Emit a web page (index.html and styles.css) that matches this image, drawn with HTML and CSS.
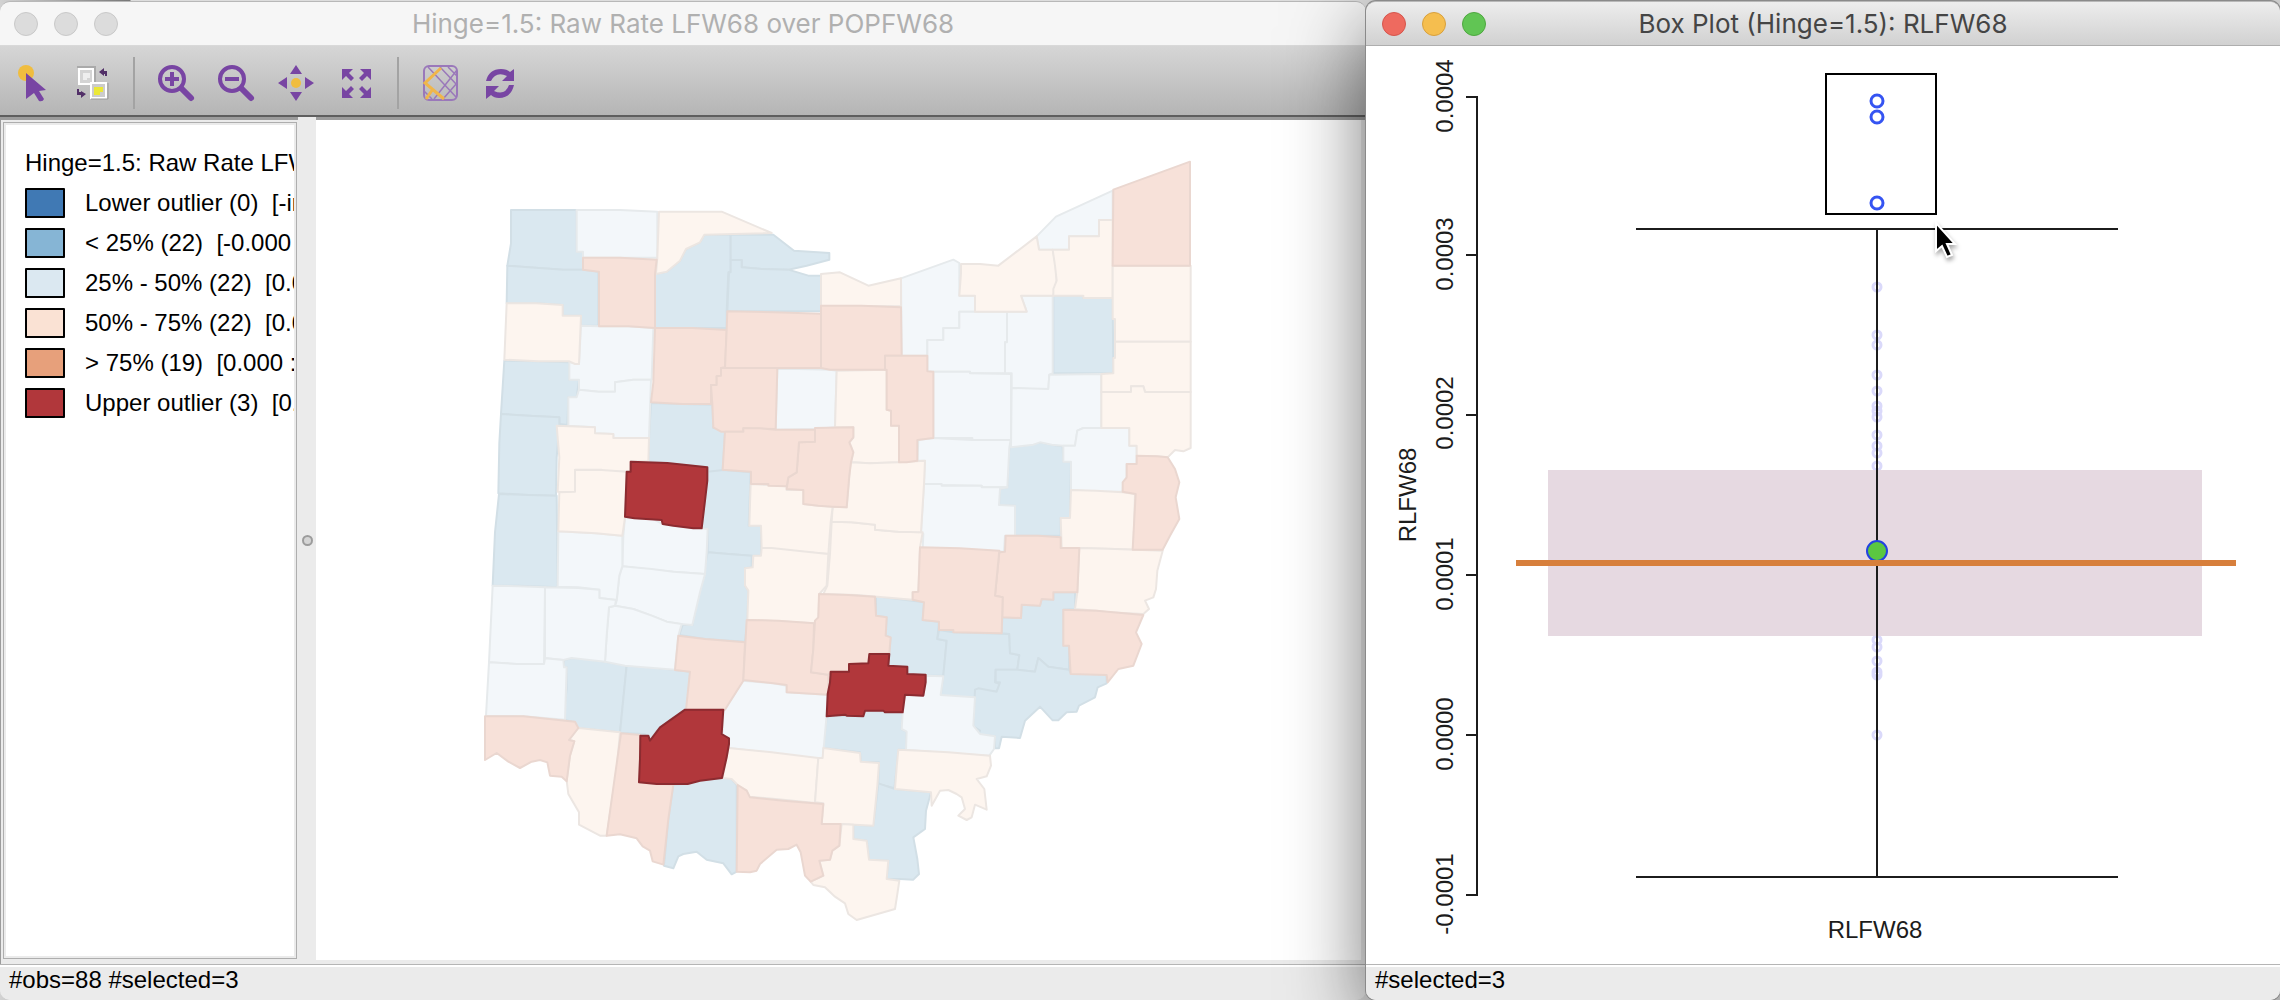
FILE: index.html
```html
<!DOCTYPE html>
<html lang="en">
<head>
<meta charset="utf-8">
<title>Hinge=1.5: Raw Rate LFW68 over POPFW68</title>
<link rel="stylesheet" href="styles.css">
</head>
<body>
<main class="desktop">
<section class="window window-map">
  <header class="titlebar titlebar-inactive">
    <div class="lights"><button class="light" aria-label="Close"></button><button class="light" aria-label="Minimize"></button><button class="light" aria-label="Zoom"></button></div>
    <h1 class="title">Hinge=1.5: Raw Rate LFW68 over POPFW68</h1>
  </header>
  <nav class="toolbar" aria-label="Map tools">
    <button class="tool" aria-label="Select"><svg viewBox="0 0 40 40"><circle cx="14" cy="10" r="8" fill="#f0bd3f"/><path d="M14 10L34 27L27 28L32 36Q31 39 27 38L22 30L14 36Z" fill="#7845a3"/></svg></button>
    <button class="tool" aria-label="Invert selection"><svg viewBox="0 0 40 40"><path d="M5 4H23V22" fill="none" stroke="#aaa" stroke-width="2"/><rect x="7" y="6" width="14" height="15" fill="#d4d4d4" stroke="#fff" stroke-width="2"/><path d="M11 10H18V15H15V17H11Z" fill="#eee"/><rect x="19" y="20" width="15" height="15" fill="#ccc" stroke="#fff" stroke-width="2"/><path d="M19 36H36V20" fill="none" stroke="#999"/><path d="M22 24H31V29H28V32H22Z" fill="#ebe837"/><path d="M27 9L32 5V8H35V13H33V11H32V13ZM5 26V32H9V35L14 31L9 28V29H7V26Z" fill="#523068"/></svg></button>
    <span class="divider"></span>
    <button class="tool" aria-label="Zoom in"><svg viewBox="0 0 40 40" fill="none" stroke="#7845a3"><circle cx="16" cy="16" r="12" stroke-width="4"/><path d="M26 26L35 35" stroke-width="6" stroke-linecap="round"/><path d="M9 16H23M16 9V23" stroke-width="4"/></svg></button>
    <button class="tool" aria-label="Zoom out"><svg viewBox="0 0 40 40" fill="none" stroke="#7845a3"><circle cx="16" cy="16" r="12" stroke-width="4"/><path d="M26 26L35 35" stroke-width="6" stroke-linecap="round"/><path d="M9 16H23" stroke-width="4"/></svg></button>
    <button class="tool" aria-label="Pan"><svg viewBox="0 0 40 40"><path d="M20 2L26 11H14ZM20 38L14 29H26ZM2 20L11 14V26ZM38 20L29 14V26Z" fill="#7845a3"/><circle cx="20" cy="20" r="5" fill="#f0bd3f"/></svg></button>
    <button class="tool" aria-label="Full extent"><svg viewBox="0 0 40 40"><path id="corner" d="M6 6H17L13 10L18 15L15 18L10 13L6 17Z" fill="#7845a3"/><use href="#corner" transform="matrix(-1 0 0 1 41 0)"/><use href="#corner" transform="matrix(1 0 0 -1 0 41)"/><use href="#corner" transform="matrix(-1 0 0 -1 41 41)"/></svg></button>
    <span class="divider"></span>
    <button class="tool" aria-label="Base map"><svg viewBox="0 0 40 40" fill="none"><rect x="4" y="3" width="33" height="34" rx="5" stroke="#9a78ba" stroke-width="2"/><path d="M8 4L36 34M20 4L37 22M37 7L14 36M37 20L23 36M28 4L37 13M4 28L12 36" stroke="#9a78ba" stroke-width="1.500"/><path d="M21 5L5 20L24 36M13 26L6 36" stroke="#f0b64a" stroke-width="3"/></svg></button>
    <button class="tool" aria-label="Refresh"><svg viewBox="0 0 40 40"><path d="M6 18Q9 6 21 6Q27 6 30 9L34 6V18H22L27 13Q16 8 11 18ZM34 22Q31 35 19 35Q14 35 11 32L6 36V23H19L14 28Q25 33 29 22Z" fill="#7845a3"/></svg></button>
  </nav>
  <div class="workspace">
    <aside class="legend-frame">
      <div class="legend">
        <h2 class="legend-title">Hinge=1.5: Raw Rate LFW68 over POPFW68</h2>
        <ul class="legend-list">
          <li><i class="swatch sw-lower"></i>Lower outlier (0)&nbsp; [-inf : -0.000]</li>
          <li><i class="swatch sw-q1"></i>&lt; 25% (22)&nbsp; [-0.000 : 0.000]</li>
          <li><i class="swatch sw-q2"></i>25% - 50% (22)&nbsp; [0.000 : 0.000]</li>
          <li><i class="swatch sw-q3"></i>50% - 75% (22)&nbsp; [0.000 : 0.000]</li>
          <li><i class="swatch sw-q4"></i>&gt; 75% (19)&nbsp; [0.000 : 0.000]</li>
          <li><i class="swatch sw-upper"></i>Upper outlier (3)&nbsp; [0.000 : inf]</li>
        </ul>
      </div>
    </aside>
    <div class="splitter"><span class="grip"></span></div>
    <div class="map-pane">
      <svg class="map" viewBox="-432 -87 3135 2517" preserveAspectRatio="xMinYMin meet" role="img" aria-label="Ohio counties">
        <g class="q1">
          <path d="M153 183L350 183L350 308L369 308L369 362L310 362L205 355L142 350L153 283Z"/>
          <path d="M142 350L205 355L310 362L370 362L415 368L415 530L363 530L363 500L308 500L308 468L228 463L140 463Z"/>
          <path d="M733 257L812 257L812 370L805 370L800 487L800 537L585 537L585 375L620 368L660 335L678 300L720 280Z"/>
          <path d="M812 257L940 257L1002 305L1108 312L1108 332L1040 350L985 362L905 360L845 355L845 333L812 333Z"/>
          <path d="M812 333L845 333L845 355L905 360L985 362L1045 380L1083 380L1083 487L802 487L807 370L812 370Z"/>
          <path d="M1780 440L1870 440L1870 447L1958 447L1960 673L1780 673Z"/>
          <path d="M133 635L235 637L328 640L328 692L357 692L350 745L325 745L322 828L298 825L298 805L205 800L123 795Z"/>
          <path d="M1648 895L1690 890L1740 880L1780 888L1808 892L1810 938L1833 938L1830 1107L1802 1107L1802 1160L1665 1160L1665 1070L1617 1068L1620 1020L1642 1015Z"/>
          <path d="M573 762L667 765L757 767L760 837L785 840L795 850L788 965L745 970L743 955L565 937L567 867Z"/>
          <path d="M123 795L205 800L298 805L298 828L290 925L288 1040L205 1038L115 1033L118 882Z"/>
          <path d="M117 1035L205 1038L290 1040L293 1315L255 1313L175 1310L98 1310L105 1150Z"/>
          <path d="M743 968L790 963L872 970L866 1130L903 1130L903 1220L875 1220L805 1215L743 1210L743 1140L725 1138L735 1055Z"/>
          <path d="M743 1210L805 1215L875 1220L875 1255L855 1258L855 1310L865 1325L862 1413L855 1478L735 1470L658 1458L668 1427L697 1428L718 1320L735 1250Z"/>
          <path d="M312 1533L335 1527L365 1528L435 1538L500 1550L490 1650L480 1750L352 1737L345 1720L310 1712L320 1620L320 1555L312 1555Z"/>
          <path d="M500 1550L570 1555L645 1563L690 1568L685 1680L640 1705L590 1745L570 1775L555 1755L480 1752L490 1650Z"/>
          <path d="M1248 1342L1315 1350L1392 1360L1388 1413L1437 1418L1432 1470L1460 1475L1450 1580L1398 1580L1342 1575L1342 1553L1285 1550L1288 1513L1292 1465L1277 1460L1280 1405L1248 1400Z"/>
          <path d="M1437 1443L1480 1450L1648 1455L1650 1513L1678 1518L1672 1562L1607 1562L1605 1600L1620 1605L1610 1628L1555 1622L1545 1647L1442 1640L1450 1580L1460 1475L1432 1470Z"/>
          <path d="M1627 1405L1683 1407L1685 1367L1740 1370L1745 1350L1780 1352L1780 1330L1845 1330L1845 1380L1810 1382L1810 1490L1827 1490L1827 1562L1765 1553L1735 1527L1725 1568L1672 1562L1678 1518L1650 1513L1648 1455L1625 1453Z"/>
          <path d="M1607 1562L1672 1562L1725 1568L1735 1527L1765 1553L1827 1562L1832 1572L1940 1577L1940 1603L1913 1615L1905 1645L1857 1670L1850 1688L1820 1690L1795 1714L1778 1714L1740 1673L1695 1715L1680 1767L1625 1763L1617 1798L1605 1798L1605 1762L1555 1757L1560 1745L1540 1732L1545 1622L1555 1618L1610 1628L1620 1600L1607 1600Z"/>
          <path d="M1100 1702L1160 1700L1210 1702L1215 1685L1328 1690L1325 1740L1340 1748L1338 1802L1315 1802L1310 1855L1303 1918L1255 1905L1257 1840L1203 1838L1200 1810L1090 1797Z"/>
          <path d="M640 1907L683 1905L720 1895L786 1887L815 1890L830 1908L830 2168L815 2176L790 2143L740 2132L710 2108L670 2115L655 2122L640 2158L612 2150L625 2010Z"/>
          <path d="M1255 1903L1305 1920L1413 1930L1398 1985L1395 2040L1360 2065L1372 2130L1377 2175L1360 2192L1320 2190L1280 2190L1285 2135L1227 2132L1220 2075L1180 2070L1180 2027L1240 2030Z"/>
        </g>
        <g class="q2">
          <path d="M350 183L480 183L592 188L592 326L369 326L369 308L350 308Z"/>
          <path d="M1323 388L1480 332L1498 342L1498 440L1545 440L1545 488L1498 488L1498 537L1450 537L1450 573L1402 573L1402 620L1325 620Z"/>
          <path d="M1730 262L1788 203L1958 125L1958 213L1917 213L1917 262L1827 262L1827 302L1737 302Z"/>
          <path d="M363 530L417 532L505 532L580 537L575 692L520 692L465 700L465 728L415 728L357 722L357 692L328 692L328 640L357 645Z"/>
          <path d="M357 722L415 728L465 728L465 700L520 692L573 692L567 867L460 867L460 855L405 853L405 835L325 830L325 745L350 745Z"/>
          <path d="M952 660L1015 660L1110 662L1130 665L1125 835L1065 840L947 842Z"/>
          <path d="M1402 573L1450 573L1450 537L1498 537L1498 488L1641 488L1641 580L1635 580L1635 673L1530 673L1530 668L1402 668Z"/>
          <path d="M1641 488L1700 488L1683 440L1778 440L1778 673L1768 677L1765 720L1710 720L1655 717L1655 673L1635 673L1635 580L1641 580Z"/>
          <path d="M1655 717L1765 720L1768 677L1924 675L1924 837L1870 837L1852 845L1845 890L1810 890L1775 887L1740 880L1720 887L1680 892L1653 895Z"/>
          <path d="M1420 668L1530 668L1530 673L1653 675L1653 873L1537 873L1537 867L1420 867Z"/>
          <path d="M1852 845L1870 837L2008 837L2008 890L2030 890L2030 945L2000 945L2000 990L1990 1000L1988 1028L1910 1028L1833 1023L1833 938L1810 938L1810 890L1845 890Z"/>
          <path d="M1372 935L1375 873L1420 867L1535 873L1652 873L1648 895L1642 1015L1565 1015L1565 1010L1445 1008L1392 1005L1395 935Z"/>
          <path d="M1392 1005L1445 1005L1445 1010L1565 1010L1565 1015L1642 1015L1620 1020L1617 1068L1665 1070L1665 1160L1635 1160L1632 1208L1500 1200L1388 1197L1390 1155L1383 1150L1388 1070Z"/>
          <path d="M495 1105L580 1110L608 1125L640 1130L725 1138L743 1140L740 1210L735 1275L640 1268L575 1262L487 1252L490 1160Z"/>
          <path d="M487 1252L575 1260L640 1268L735 1275L720 1330L697 1428L660 1425L620 1418L575 1400L520 1380L465 1370L470 1355L478 1280Z"/>
          <path d="M295 1147L408 1153L487 1160L487 1252L478 1280L470 1353L418 1347L418 1322L355 1315L293 1313Z"/>
          <path d="M465 1370L447 1375L440 1460L435 1538L495 1550L645 1562L655 1460L665 1425L620 1418L575 1400L520 1380Z"/>
          <path d="M255 1315L355 1317L418 1322L418 1347L468 1353L465 1370L447 1375L440 1460L435 1538L335 1527L310 1533L255 1527Z"/>
          <path d="M98 1310L175 1312L255 1315L252 1545L170 1545L87 1540Z"/>
          <path d="M87 1540L170 1545L252 1545L255 1528L310 1533L312 1555L320 1555L315 1712L190 1702L78 1700Z"/>
          <path d="M1398 1580L1450 1582L1442 1638L1545 1645L1540 1730L1560 1755L1605 1762L1602 1800L1588 1820L1465 1813L1338 1802L1340 1748L1325 1740L1328 1690L1335 1638L1390 1640Z"/>
          <path d="M848 1595L940 1603L980 1610L980 1630L1103 1637L1098 1720L1088 1830L1030 1825L935 1812L805 1797L808 1770L787 1765L790 1682L815 1650Z"/>
        </g>
        <g class="q3">
          <path d="M597 188L785 188L935 252L733 257L720 280L678 300L660 335L620 368L588 375L592 326Z"/>
          <path d="M1083 375L1140 370L1225 410L1323 388L1323 472L1083 470Z"/>
          <path d="M1503 345L1560 345L1615 350L1730 262L1737 302L1778 302L1787 350L1790 395L1780 440L1683 440L1700 488L1545 488L1545 440L1498 440L1503 373Z"/>
          <path d="M1778 302L1827 302L1827 262L1917 262L1917 213L1958 213L1958 447L1870 447L1870 440L1780 440L1780 420L1790 395L1785 350Z"/>
          <path d="M140 463L228 463L308 468L308 500L363 500L357 645L345 645L328 637L235 637L133 632Z"/>
          <path d="M1130 665L1280 662L1280 782L1293 785L1293 830L1317 830L1317 940L1230 943L1173 940L1180 910L1168 880L1180 865L1180 835L1125 835Z"/>
          <path d="M1958 350L2192 350L2192 578L1965 578L1965 510L1958 510Z"/>
          <path d="M1965 578L2192 578L2192 729L2055 729L2050 712L2013 712L2013 729L1924 729L1924 675L1960 673L1960 627L1965 627Z"/>
          <path d="M1924 729L2013 729L2013 712L2050 712L2055 729L2192 729L2192 897L2170 907L2145 903L2123 925L2090 922L2030 920L2030 890L2008 890L2008 837L1924 837Z"/>
          <path d="M1833 1023L1908 1025L1988 1030L2025 1035L2020 1202L1965 1200L1858 1197L1805 1197L1802 1107L1830 1107Z"/>
          <path d="M1858 1197L1965 1200L2108 1205L2092 1265L2088 1320L2080 1345L2055 1355L2067 1380L2050 1395L1945 1390L1910 1385L1845 1380L1852 1330Z"/>
          <path d="M1115 1118L1175 1120L1245 1127L1245 1142L1315 1148L1388 1150L1380 1195L1375 1328L1358 1330L1358 1352L1270 1345L1190 1338L1090 1335L1102 1310L1110 1215Z"/>
          <path d="M1172 940L1230 943L1315 940L1395 935L1392 1005L1383 1150L1315 1148L1245 1142L1245 1127L1175 1120L1115 1118L1118 1073L1160 1075L1168 980Z"/>
          <path d="M290 830L405 835L405 853L460 855L460 867L567 867L565 937L512 937L510 968L430 968L425 962L345 962L345 1030L293 1028L298 925Z"/>
          <path d="M345 963L425 963L500 968L495 1105L487 1160L408 1153L295 1147L298 1030L345 1028Z"/>
          <path d="M872 1005L925 1008L980 1012L980 1023L1030 1023L1030 1065L1075 1070L1118 1073L1112 1120L1105 1215L1040 1210L905 1197L903 1130L868 1130Z"/>
          <path d="M905 1197L935 1197L1040 1208L1105 1215L1100 1310L1078 1335L1075 1405L1062 1423L960 1417L862 1413L865 1325L855 1310L855 1258L878 1255L880 1220L903 1220Z"/>
          <path d="M1315 1802L1380 1805L1465 1810L1590 1820L1593 1850L1580 1882L1550 1890L1573 1920L1580 1982L1545 1967L1535 2005L1520 2013L1495 2000L1515 1980L1505 1945L1490 1935L1465 1923L1440 1925L1415 1970L1413 1930L1305 1920L1310 1855Z"/>
          <path d="M355 1737L480 1750L470 1860L440 2060L420 2060L357 2027L357 1990L325 1935L320 1895L330 1820L343 1777L327 1773Z"/>
          <path d="M805 1797L935 1810L1075 1827L1065 1962L970 1952L868 1943L860 1925L833 1908L815 1890L788 1887Z"/>
          <path d="M1090 1797L1200 1812L1202 1838L1257 1842L1252 1910L1240 2030L1145 2025L1085 2025L1090 1963L1065 1960L1075 1827L1088 1827Z"/>
          <path d="M1145 2025L1180 2027L1180 2070L1220 2075L1227 2132L1285 2135L1280 2190L1318 2195L1312 2235L1305 2280L1190 2313L1165 2295L1155 2263L1125 2243L1095 2215L1060 2208L1052 2198L1090 2180L1078 2135L1110 2132L1117 2105L1138 2090Z"/>
        </g>
        <g class="q4">
          <path d="M369 326L480 326L590 332L585 375L585 537L505 532L417 532L417 368L369 362Z"/>
          <path d="M1960 122L2190 38L2190 350L1958 350Z"/>
          <path d="M585 537L697 537L800 543L795 655L783 657L783 680L770 682L770 708L753 708L753 765L667 765L573 760L580 700Z"/>
          <path d="M802 487L942 490L1083 494L1083 657L795 657L800 543Z"/>
          <path d="M1083 470L1205 470L1323 475L1325 620L1275 620L1275 662L1110 662L1083 657Z"/>
          <path d="M783 657L952 657L947 840L850 838L850 848L783 848L760 835L757 765L753 708L770 708L770 682L783 680Z"/>
          <path d="M1275 620L1402 620L1402 667L1420 668L1420 867L1372 873L1372 935L1340 940L1317 940L1317 830L1293 830L1293 785L1280 782L1280 662L1275 662Z"/>
          <path d="M2030 920L2090 922L2123 925L2145 960L2158 1000L2147 1045L2158 1110L2130 1160L2108 1202L2018 1202L2027 1035L1988 1028L1988 1000L2000 985L2000 945L2030 945Z"/>
          <path d="M1637 1160L1735 1160L1802 1165L1802 1197L1858 1197L1852 1330L1780 1330L1780 1352L1745 1350L1740 1370L1685 1367L1683 1407L1627 1405L1628 1345L1605 1340L1618 1210L1635 1208Z"/>
          <path d="M1380 1195L1500 1198L1618 1205L1605 1340L1628 1345L1625 1453L1480 1450L1480 1443L1437 1443L1437 1418L1388 1413L1392 1360L1358 1352L1358 1330L1375 1328Z"/>
          <path d="M1065 837L1180 835L1180 865L1168 880L1180 910L1173 940L1168 980L1160 1075L1118 1073L1075 1070L1030 1065L1030 1023L980 1020L985 985L1010 970L1017 880L1065 878Z"/>
          <path d="M795 848L850 848L850 838L900 838L947 842L1065 842L1065 878L1017 880L1010 970L985 985L980 1012L925 1010L925 1005L873 1005L873 968L788 962Z"/>
          <path d="M655 1460L735 1470L855 1480L850 1595L815 1650L795 1682L678 1682L690 1568L645 1563Z"/>
          <path d="M860 1413L955 1415L1062 1423L1060 1500L1053 1570L1105 1577L1105 1637L980 1630L980 1608L940 1603L850 1593Z"/>
          <path d="M1077 1335L1165 1338L1245 1343L1248 1400L1280 1405L1277 1460L1292 1465L1288 1513L1228 1515L1225 1545L1170 1545L1167 1570L1110 1572L1105 1577L1053 1570L1060 1500L1065 1415L1075 1405Z"/>
          <path d="M1810 1382L1910 1385L2050 1398L2028 1450L2045 1485L2020 1550L1975 1560L1943 1600L1940 1578L1832 1575L1827 1490L1810 1490Z"/>
          <path d="M75 1702L190 1702L345 1718L355 1737L327 1773L343 1777L330 1820L320 1897L305 1883L270 1880L262 1840L240 1833L215 1838L180 1857L145 1838L110 1812L75 1833Z"/>
          <path d="M483 1753L541 1758L537 1900L590 1905L640 1907L625 2010L610 2147L578 2137L570 2105L548 2092L530 2068L480 2056L440 2060L465 1880Z"/>
          <path d="M833 1908L860 1925L870 1945L970 1955L1090 1965L1085 2025L1142 2025L1138 2090L1117 2105L1110 2132L1078 2135L1090 2180L1052 2198L1035 2180L1022 2110L1010 2087L985 2100L950 2102L900 2145L890 2165L870 2170L830 2168Z"/>
        </g>
        <g class="selected">
          <path d="M512 938L622 942L742 955L742 995L735 1055L725 1138L700 1138L640 1130L608 1125L605 1113L523 1108L495 1103L500 968L512 968Z"/>
          <path d="M1112 1568L1167 1568L1167 1545L1225 1543L1228 1515L1288 1515L1285 1550L1342 1553L1342 1575L1397 1577L1397 1600L1390 1640L1335 1637L1328 1690L1275 1690L1270 1685L1215 1685L1210 1702L1160 1700L1155 1697L1100 1702L1103 1635L1110 1600Z"/>
          <path d="M541 1760L565 1760L570 1775L600 1735L675 1682L790 1682L785 1755L807 1768L807 1785L800 1825L786 1887L720 1895L683 1905L590 1905L537 1900L540 1830Z"/>
        </g>
      </svg>
    </div>
  </div>
  <footer class="statusbar">#obs=88 #selected=3</footer>
</section>
<section class="window window-plot">
  <header class="titlebar">
    <div class="lights"><button class="light light-close" aria-label="Close"></button><button class="light light-min" aria-label="Minimize"></button><button class="light light-zoom" aria-label="Zoom"></button></div>
    <h1 class="title">Box Plot (Hinge=1.5): RLFW68</h1>
  </header>
  <div class="plot-pane">
    <svg class="plot" viewBox="1366 46 914 918" preserveAspectRatio="xMidYMin meet" role="img" aria-label="Box plot of RLFW68">
      <path class="axis" d="M1466 97H1477V895H1466M1466 255H1477M1466 415H1477M1466 575H1477M1466 735H1477"/>
      <g class="axis-text">
        <text transform="translate(1453 96) rotate(-90)">0.0004</text>
        <text transform="translate(1453 254) rotate(-90)">0.0003</text>
        <text transform="translate(1453 413) rotate(-90)">0.0002</text>
        <text transform="translate(1453 574) rotate(-90)">0.0001</text>
        <text transform="translate(1453 734) rotate(-90)">0.0000</text>
        <text transform="translate(1453 894) rotate(-90)">-0.0001</text>
        <text transform="translate(1416 495) rotate(-90)">RLFW68</text>
        <text x="1875" y="938">RLFW68</text>
      </g>
      <g class="faded-points">
        <circle cx="1877" cy="287" r="4"/><circle cx="1877" cy="335" r="4"/><circle cx="1877" cy="345" r="4"/><circle cx="1877" cy="375" r="4"/><circle cx="1877" cy="391" r="4"/><circle cx="1877" cy="406" r="4"/><circle cx="1877" cy="411" r="4"/><circle cx="1877" cy="417" r="4"/><circle cx="1877" cy="435" r="4"/><circle cx="1877" cy="446" r="4"/><circle cx="1877" cy="453" r="4"/><circle cx="1877" cy="466" r="4"/><circle cx="1877" cy="640" r="4"/><circle cx="1877" cy="647" r="4"/><circle cx="1877" cy="661" r="4"/><circle cx="1877" cy="672" r="4"/><circle cx="1877" cy="675" r="4"/><circle cx="1877" cy="735" r="4"/>
      </g>
      <rect class="box" x="1548" y="470" width="654" height="166"/>
      <path class="axis" d="M1636 229H2118M1636 877H2118M1877 229V877"/>
      <circle class="mean" cx="1877" cy="551" r="10"/>
      <rect class="median" x="1516" y="560" width="720" height="6"/>
      <g class="points"><circle cx="1877" cy="101" r="6"/><circle cx="1877" cy="117" r="6"/><circle cx="1877" cy="203" r="6"/></g>
      <rect class="brush" x="1826" y="74" width="110" height="140"/>
      <path class="pointer" d="M1936 223V251L1942 246L1947 257L1952 255L1947 244H1955Z"/>
    </svg>
  </div>
  <footer class="statusbar">#selected=3</footer>
</section>
</main>
</body>
</html>
```
FILE: styles.css
```css
* { box-sizing: border-box; }

body {
  margin: 0;
  background: linear-gradient(90deg, #d2d2d2, #777 130px, #ddd 131px);
  font-family: "Liberation Sans", Arial, sans-serif;
  font-size: 24px;
  color: #000;
}

h1, h2, ul { margin: 0; padding: 0; font-size: inherit; font-weight: 400; }
button { margin: 0; padding: 0; border: 0; background: none; }

.desktop {
  display: grid;
  grid-template-columns: 1366fr 914fr;
  min-height: 100vh;
  padding-top: 1px;
  overflow: hidden;
}

.window {
  display: flex;
  flex-direction: column;
  min-width: 0;
  border-top: 1px solid #b8b8b8;
  border-radius: 10px;
  background: #ebebeb;
}
.window-map { overflow: hidden; }
.window-plot {
  position: relative;
  box-shadow: 0 0 0 1px #8a8a8a, 0 24px 80px rgba(0, 0, 0, .55);
}

.titlebar {
  display: grid;
  grid-template-columns: 120px 1fr 120px;
  align-items: center;
  height: 44px;
  border-bottom: 1px solid #aeaeae;
  border-radius: 10px 10px 0 0;
  background: linear-gradient(#ededed, #d1d1d1);
  color: #454545;
}
.titlebar-inactive { background: #f6f6f6; border-color: #d9d9d9; color: #b0b0b0; }
.title { font-family: Inter, "Noto Sans", sans-serif; font-size: 26px; line-height: 32px; text-align: center; white-space: nowrap; }
.lights { display: flex; gap: 16px; padding-left: 16px; }
.titlebar-inactive .lights { padding-left: 14px; }
.light { width: 24px; height: 24px; border: 1px solid #c9c9c9; border-radius: 50%; background: #dcdcdc; }
.light-close { background: #ee6a5f; border-color: #d5554c; }
.light-min { background: #f5be4f; border-color: #d8a03d; }
.light-zoom { background: #61c554; border-color: #4ea73f; }

.toolbar {
  display: flex;
  align-items: center;
  height: 71px;
  padding: 5px 2px 0;
  border-bottom: 2px solid #5e5e5e;
  background: linear-gradient(#d6d6d6, #b5b5b5);
}
.tool { width: 60px; height: 40px; }
.tool svg { display: block; width: 40px; height: 40px; margin: 0 auto; }
.divider { width: 2px; height: 52px; margin: 0 11px; background: #a3a3a3; }

.workspace { flex: 1; display: flex; min-height: 0; padding-right: 5px; border-top: 3px solid #9c9c9c; }
.legend-frame { width: 298px; padding: 2px 1px 5px 2px; border-left: 1px solid #9c9c9c; }
.legend { height: 100%; padding: 26px 0 0 21px; overflow: hidden; border: 1px solid #aeaeae; outline: 2px solid #ebebeb; outline-offset: -3px; background: #fff; white-space: nowrap; }
.legend-title { line-height: 28px; }
.legend-list { padding-top: 6px; list-style: none; }
.legend-list li { display: flex; align-items: center; height: 40px; }
.swatch { flex: none; width: 40px; height: 30px; margin-right: 20px; border: 2px solid #000; border-radius: 1px; }
.sw-lower { background: #4079b4; }
.sw-q1 { background: #86b5d5; }
.sw-q2 { background: #dbe8f1; }
.sw-q3 { background: #fae2d4; }
.sw-q4 { background: #e7a07b; }
.sw-upper { background: #b1373b; }

.splitter { display: flex; align-items: center; justify-content: center; width: 18px; margin-top: -3px; background: #ebebeb; }
.grip { width: 11px; height: 11px; border: 2px solid #9c9c9c; border-radius: 50%; background: #d5d5d5; }
.map-pane { flex: 1; min-width: 0; margin-bottom: 4px; background: #fff; }
.map { display: block; width: 100%; height: auto; }
.map path { stroke-width: 6; stroke-linejoin: round; }
.q1 { fill: #dae8f0; stroke: #d2dfe6; }
.q2 { fill: #f3f7fa; stroke: #e6eaec; }
.q3 { fill: #fdf5ef; stroke: #ece6e2; }
.q4 { fill: #f7e1d9; stroke: #ead7d0; }
.selected { fill: #b1373b; stroke: #8c2b30; }

.plot-pane { flex: 1; min-height: 0; background: #fff; }
.plot { display: block; width: 100%; height: auto; }
.axis { fill: none; stroke: #1c1c1c; stroke-width: 2; }
.axis-text { font-size: 24px; fill: #1c1c1c; text-anchor: middle; }
.faded-points { fill: none; stroke: #dad9fa; stroke-width: 3; }
.box { fill: #e6d9e1; }
.mean { fill: #5bc742; stroke: #2343e0; stroke-width: 2; }
.median { fill: #d77f3c; }
.points { fill: none; stroke: #3554f2; stroke-width: 3; }
.brush { fill: none; stroke: #000; stroke-width: 2; }
.pointer { fill: #000; stroke: #fff; stroke-width: 2; filter: drop-shadow(1px 3px 2px rgba(0, 0, 0, .35)); }

.statusbar {
  height: 36px;
  padding: 0 9px;
  border-top: 1px solid #b5b5b5;
  border-radius: 0 0 10px 10px;
  box-shadow: inset 0 2px #fff;
  background: #ebebeb;
  line-height: 30px;
}
```
